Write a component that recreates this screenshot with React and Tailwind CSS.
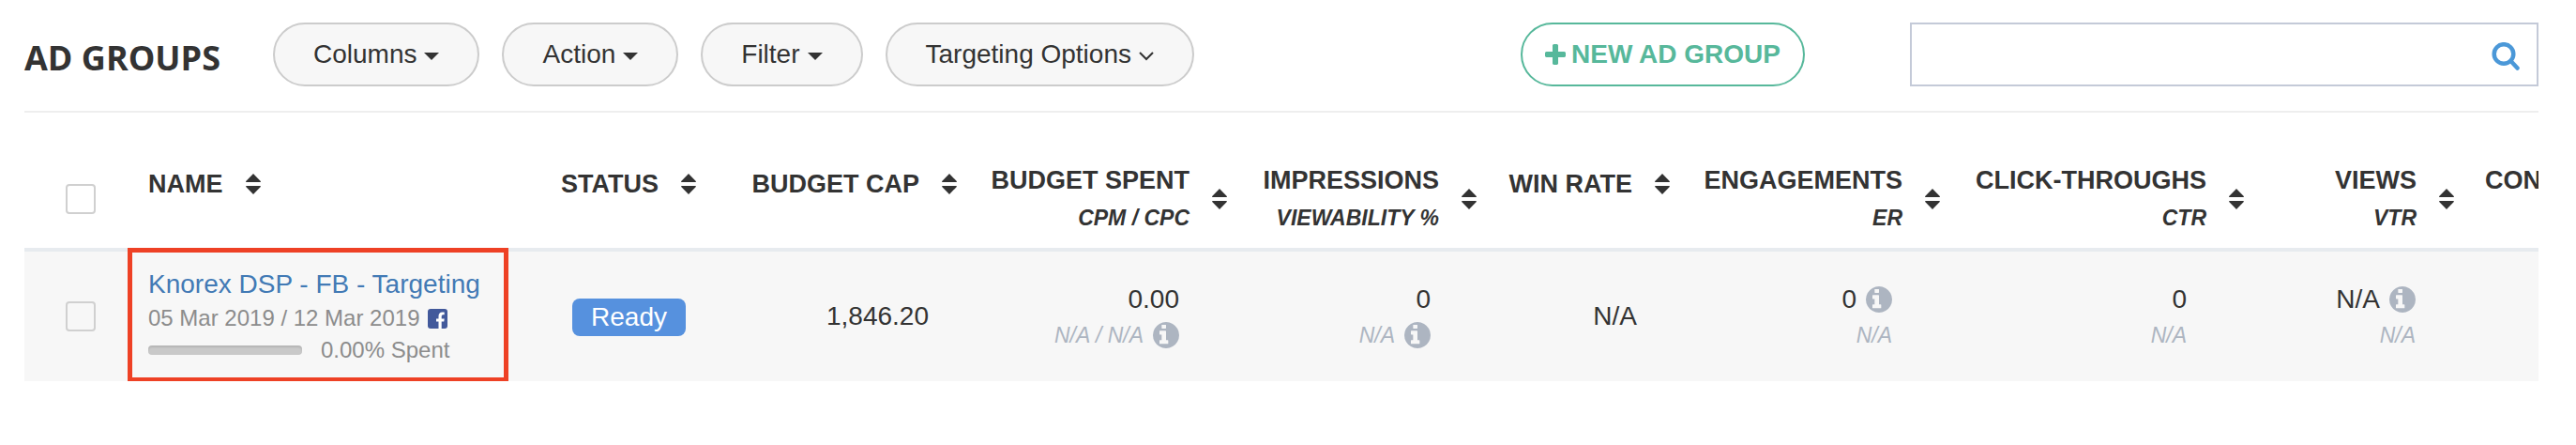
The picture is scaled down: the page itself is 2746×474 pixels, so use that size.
import React from "react";

const INFO =
  "M1024 1376v-160q0-14-9-23t-23-9h-96v-512q0-14-9-23t-23-9h-320q-14 0-23 9t-9 23v160q0 14 9 23t23 9h96v320h-96q-14 0-23 9t-9 23v160q0 14 9 23t23 9h448q14 0 23-9t9-23zM896 480v-160q0-14-9-23t-23-9h-192q-14 0-23 9t-9 23v160q0 14 9 23t23 9h192q14 0 23-9t9-23zM1664 896q0 209-103 385.5t-279.5 279.5-385.5 103-385.5-103-279.5-279.5-103-385.5 103-385.5 279.5-279.5 385.5-103 385.5 103 279.5 279.5 103 385.5z";
const PLUS =
  "M1600 736v192q0 40-28 68t-68 28h-416v416q0 40-28 68t-68 28h-192q-40 0-68-28t-28-68v-416h-416q-40 0-68-28t-28-68v-192q0-40 28-68t68-28h416v-416q0-40 28-68t68-28h192q40 0 68 28t28 68v416h416q40 0 68 28t28 68z";

function Info() {
  return (
    <svg viewBox="128 128 1536 1536" className="h-7 w-7 fill-current" aria-hidden="true">
      <path d={INFO} />
    </svg>
  );
}

function Sort() {
  return (
    <svg viewBox="0 0 16 22" className="h-[22px] w-4 shrink-0 fill-current" aria-hidden="true">
      <path d="M8 0 15.800 8q.4 1-.6 1H.8Q-.2 9 .2 8zM8 22 15.800 14q.4-1-.6-1H.8q-1 0-.6 1z" />
    </svg>
  );
}

function Caret() {
  return (
    <svg viewBox="0 0 16 8" className="mt-1 h-2 w-4 fill-current" aria-hidden="true">
      <path d="M0 0h16L8 8z" />
    </svg>
  );
}

function Chevron() {
  return (
    <svg viewBox="0 0 16 10" className="mt-1 h-2.5 w-4 fill-none stroke-current" aria-hidden="true">
      <path d="m1 1 7 7 7-7" strokeWidth="2" />
    </svg>
  );
}

function MenuButton({ label, icon }) {
  return (
    <button
      type="button"
      className="flex h-[68px] items-center gap-2 rounded-full border-2 border-[#ccc] bg-[#f7f7f7] px-[41px] whitespace-nowrap"
    >
      {label}
      {icon}
    </button>
  );
}

function Check({ label }) {
  return (
    <input
      type="checkbox"
      aria-label={label}
      className="block h-8 w-8 appearance-none rounded-sm border-2 border-[#d0d0d0] bg-transparent"
    />
  );
}

const COLUMNS = [
  { title: "NAME", width: "w-[441px]", align: "justify-start" },
  { title: "STATUS", width: "w-[177px]", align: "justify-end" },
  { title: "BUDGET CAP", width: "w-[278px]", align: "justify-end" },
  { title: "BUDGET SPENT", sub: "CPM / CPC", width: "w-[288px]", align: "justify-end" },
  { title: "IMPRESSIONS", sub: "VIEWABILITY %", width: "w-[266px]", align: "justify-end" },
  { title: "WIN RATE", width: "w-[206px]", align: "justify-end" },
  { title: "ENGAGEMENTS", sub: "ER", width: "w-[288px]", align: "justify-end" },
  { title: "CLICK-THROUGHS", sub: "CTR", width: "w-[324px]", align: "justify-end" },
  { title: "VIEWS", sub: "VTR", width: "w-[224px]", align: "justify-end" },
];

const RULE = "border-b-4 border-[#e7ebef]";

function HeaderCell({ title, sub, align }) {
  return (
    <th scope="col" className={`px-[17px] align-top ${sub ? "pt-3" : "pt-4"} ${RULE}`}>
      <button type="button" className={`flex w-full items-center gap-6 text-right font-bold ${align}`}>
        <span>
          <span className="block text-[27px] leading-10 whitespace-nowrap">{title}</span>
          {sub && <span className="block text-[23px] leading-10 whitespace-nowrap italic">{sub}</span>}
        </span>
        <Sort />
      </button>
    </th>
  );
}

function Metric({ value, rate, valueInfo, rateInfo, pad }) {
  return (
    <td className={pad}>
      <div className="flex h-10 items-center justify-end gap-2.5">
        {value}
        {valueInfo && <span className="text-[#adb5c1]"><Info /></span>}
      </div>
      {rate && (
        <div className="flex items-center justify-end gap-2.5 text-[23px] leading-9 text-[#adb5c1] italic">
          {rate}
          {rateInfo && <Info />}
        </div>
      )}
    </td>
  );
}

export default function App() {
  return (
    <main className="bg-white pr-10 pl-[26px] font-['Liberation_Sans',Arial,sans-serif] text-[28px] leading-10 text-[#333]">
      <header className="flex items-center border-b-2 border-[#eee] pt-6 pb-[26px]">
        <h1 className="mr-14 pt-2 font-['Open_Sans',sans-serif] text-4xl font-bold whitespace-nowrap">AD GROUPS</h1>
        <div className="flex gap-6">
          <MenuButton label="Columns" icon={<Caret />} />
          <MenuButton label="Action" icon={<Caret />} />
          <MenuButton label="Filter" icon={<Caret />} />
          <MenuButton label="Targeting Options" icon={<Chevron />} />
        </div>
        <button
          type="button"
          className="ml-auto flex h-[68px] items-center gap-1.5 rounded-full border-2 border-[#57b89b] px-6 font-bold whitespace-nowrap text-[#57b89b]"
        >
          <svg viewBox="192 128 1408 1408" className="h-[22px] w-[22px] fill-current" aria-hidden="true">
            <path d={PLUS} />
          </svg>
          NEW AD GROUP
        </button>
        <form className="ml-28 flex h-[68px] w-1/4 items-center border-2 border-[#c4cad8] pr-[18px]">
          <input type="text" aria-label="Search ad groups" className="h-full min-w-0 flex-1 px-4 outline-none" />
          <button type="button" aria-label="Search" className="pt-1 text-[#4b98d8]">
            <svg viewBox="0 0 30 30" className="h-[30px] w-[30px] fill-none stroke-current" aria-hidden="true">
              <circle cx="13" cy="12.500" r="10.300" strokeWidth="4.500" />
              <path d="m20.500 20 7 7.500" strokeWidth="4.500" strokeLinecap="round" />
            </svg>
          </button>
        </form>
      </header>

      <div className="overflow-hidden pt-10">
        <table className="w-full table-fixed border-separate border-spacing-0">
          <colgroup>
            <col className="w-[115px]" />
            {COLUMNS.map((c) => (
              <col key={c.title} className={c.width} />
            ))}
            <col />
          </colgroup>
          <thead>
            <tr className="h-[108px]">
              <th className={`pl-11 align-middle ${RULE}`}>
                <Check label="Select all ad groups" />
              </th>
              {COLUMNS.map((c) => (
                <HeaderCell key={c.title} {...c} />
              ))}
              <th
                scope="col"
                className={`overflow-hidden pt-3 pl-4 text-left align-top text-[27px] font-bold whitespace-nowrap ${RULE}`}
              >
                CON
              </th>
            </tr>
          </thead>
          <tbody>
            <tr className="h-[138px] bg-[#f7f7f7]">
              <td className="pl-11">
                <Check label="Select Knorex DSP - FB - Targeting" />
              </td>
              <td className="relative px-[17px]">
                <div className="absolute -top-1 -left-[5px] h-[143px] w-[406px] border-[5px] border-[#ee4125]" />
                <div className="relative text-2xl leading-[34px] text-[#8c8c8c]">
                  <a href="#ad-group" className="block text-[28px] leading-[38px] text-[#427ab5]">
                    Knorex DSP - FB - Targeting
                  </a>
                  <div className="flex items-center gap-2">
                    05 Mar 2019 / 12 Mar 2019
                    <svg viewBox="0 0 21 21" className="h-[21px] w-[21px]" aria-hidden="true">
                      <rect width="21" height="21" rx="3" fill="#42599b" />
                      <path d="M11.500 21v-7.500H9v-3h2.500V8Q11.500 3.500 15.500 3.500h2.200v2.700h-1.500q-1.500 0-1.500 1.500v2.800h3l-.4 3h-2.600V21z" fill="#fff" />
                    </svg>
                  </div>
                  <div className="flex items-center gap-5">
                    <div
                      role="progressbar"
                      aria-label="Budget spent"
                      aria-valuenow={0}
                      className="h-2.5 w-[164px] rounded-sm bg-[#c9c9c9] shadow-[inset_0_2px_2px_rgba(0,0,0,0.1)]"
                    />
                    0.00% Spent
                  </div>
                </div>
              </td>
              <td className="text-center">
                <span className="inline-block rounded-lg bg-[#5691de] px-5 align-middle text-white">Ready</span>
              </td>
              <Metric value="1,846.20" pad="pr-[47px]" />
              <Metric value="0.00" rate="N/A / N/A" rateInfo pad="pr-[68px]" />
              <Metric value="0" rate="N/A" rateInfo pad="pr-[66px]" />
              <Metric value="N/A" pad="pr-[52px]" />
              <Metric value="0" rate="N/A" valueInfo pad="pr-[68px]" />
              <Metric value="0" rate="N/A" pad="pr-[78px]" />
              <Metric value="N/A" rate="N/A" valueInfo pad="pr-[58px]" />
              <td />
            </tr>
          </tbody>
        </table>
      </div>
    </main>
  );
}
